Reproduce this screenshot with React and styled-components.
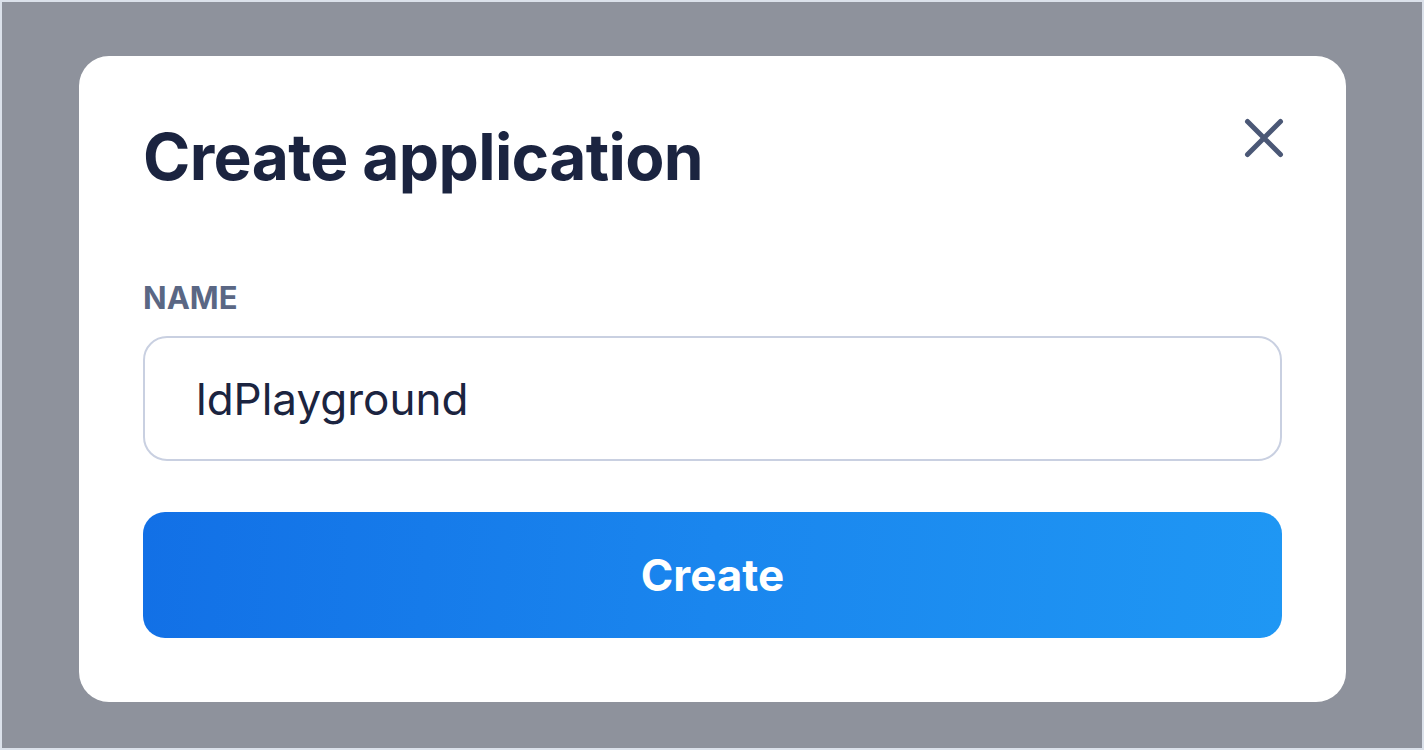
import React from "react";
import styled, { createGlobalStyle } from "styled-components";

const Global = createGlobalStyle`
  html, body { margin: 0; padding: 0; }
  body { background: #dfe4ec; font-family: Inter, "Noto Sans", sans-serif; }
  * { box-sizing: border-box; }
`;

const Backdrop = styled.div`
  width: 1424px;
  height: 750px;
  border: 2px solid #dbe1ea;
  background: #8e929c;
  padding: 54px 76px 46px 77px;
  display: flex;
  align-items: flex-start;
`;

const Modal = styled.div`
  width: 1267px;
  height: 646px;
  background: #ffffff;
  border-radius: 30px;
  padding: 54px 64px 64px 64px;
  display: flex;
  flex-direction: column;
`;

const Header = styled.div`
  display: flex;
  justify-content: space-between;
  align-items: flex-start;
`;

const Title = styled.h2`
  margin: 7px 0 0 0;
  font-size: 64px;
  line-height: 80px;
  font-weight: 700;
  color: #1b2440;
  letter-spacing: -0.65px;
`;

const CloseButton = styled.button`
  border: 0;
  background: none;
  padding: 0;
  margin: 6px -4px 0 0;
  width: 44px;
  height: 44px;
  display: flex;
  align-items: center;
  justify-content: center;
  color: #4b5876;
  cursor: pointer;
`;

const Label = styled.label`
  margin-top: 83px;
  font-size: 31px;
  line-height: 36px;
  font-weight: 700;
  color: #5a6784;
  text-transform: uppercase;
`;

const Input = styled.input`
  margin-top: 20px;
  width: 100%;
  height: 125px;
  border: 2px solid #c9d0e1;
  border-radius: 24px;
  padding: 0 51px;
  font-family: Inter, "Noto Sans", sans-serif;
  font-size: 44px;
  color: #1b2440;
  outline: none;
  background: #fff;
`;

const PrimaryButton = styled.button`
  margin-top: 51px;
  width: 100%;
  height: 126px;
  border: 0;
  border-radius: 22px;
  background: linear-gradient(95deg, #1270e6 0%, #1a86ee 50%, #1f97f4 100%);
  color: #ffffff;
  font-family: Inter, "Noto Sans", sans-serif;
  font-size: 44px;
  font-weight: 700;
  cursor: pointer;
`;

export default function App() {
  return (
    <>
      <Global />
      <Backdrop>
        <Modal>
          <Header>
            <Title>Create application</Title>
            <CloseButton aria-label="Close">
              <svg width="40" height="40" viewBox="0 0 40 40" fill="none">
                <path d="M3.5 3.5 L36.5 36.5 M36.5 3.5 L3.5 36.5" stroke="currentColor" strokeWidth="5" strokeLinecap="round" />
              </svg>
            </CloseButton>
          </Header>
          <Label>Name</Label>
          <Input defaultValue="ldPlayground" />
          <PrimaryButton>Create</PrimaryButton>
        </Modal>
      </Backdrop>
    </>
  );
}
